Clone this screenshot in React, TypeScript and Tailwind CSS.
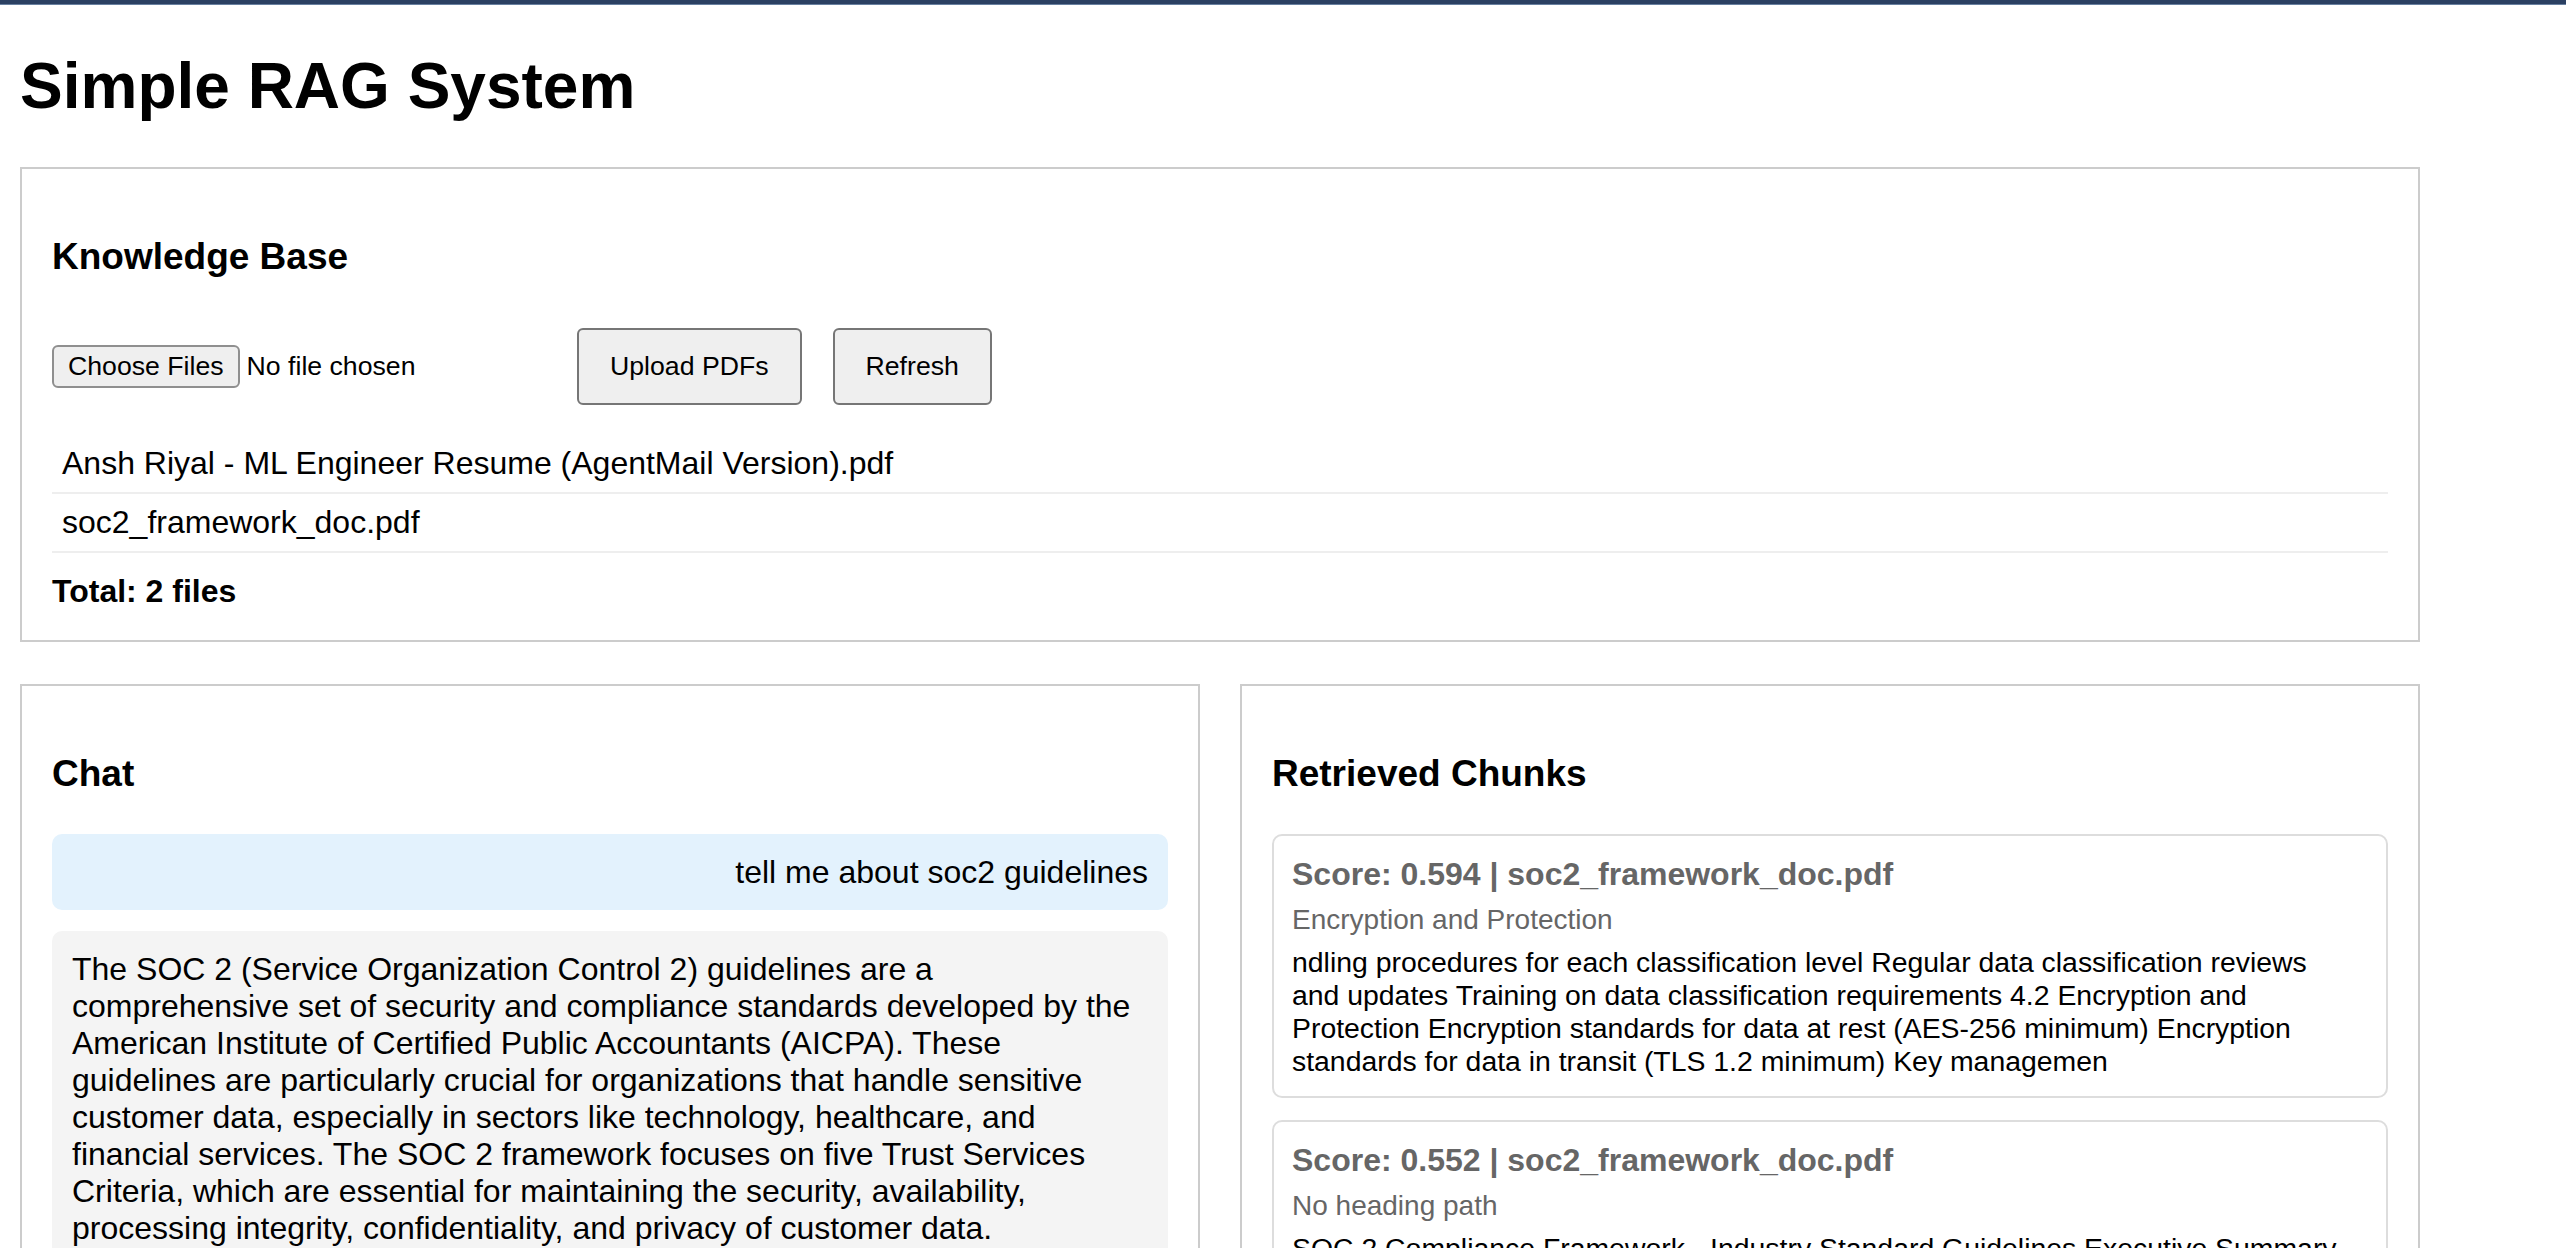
import { useState } from "react";

const files = [
  "Ansh Riyal - ML Engineer Resume (AgentMail Version).pdf",
  "soc2_framework_doc.pdf",
];

const chunks = [
  {
    score: "0.594",
    source: "soc2_framework_doc.pdf",
    path: "Encryption and Protection",
    text: "ndling procedures for each classification level Regular data classification reviews and updates Training on data classification requirements 4.2 Encryption and Protection Encryption standards for data at rest (AES-256 minimum) Encryption standards for data in transit (TLS 1.2 minimum) Key managemen",
  },
  {
    score: "0.552",
    source: "soc2_framework_doc.pdf",
    path: "No heading path",
    text: "SOC 2 Compliance Framework - Industry Standard Guidelines Executive Summary This document outlines the comprehensive SOC 2 compliance framework for organizations handling sensitive customer data.",
  },
];

const answer =
  "The SOC 2 (Service Organization Control 2) guidelines are a comprehensive set of security and compliance standards developed by the American Institute of Certified Public Accountants (AICPA). These guidelines are particularly crucial for organizations that handle sensitive customer data, especially in sectors like technology, healthcare, and financial services. The SOC 2 framework focuses on five Trust Services Criteria, which are essential for maintaining the security, availability, processing integrity, confidentiality, and privacy of customer data.";

function Panel({ title, children }: { title: string; children: React.ReactNode }) {
  return (
    <section className="border-2 border-[#cccccc] px-[30px] pt-[30px] pb-[30px]">
      <h3 className="mt-[37px] mb-[39px] text-[37px] leading-[42px] font-bold">{title}</h3>
      {children}
    </section>
  );
}

export default function App() {
  const [question, setQuestion] = useState("");

  return (
    <div className="min-h-screen bg-white text-black font-['Liberation_Sans',Arial,sans-serif]">
      {/* window strip */}
      <div className="h-[4px] bg-[#2b4062]" />
      <div className="h-px bg-[#6880a0]" />

      <div className="px-[20px] pb-[40px]">
        <div className="max-w-[2400px]">
          <h1 className="mt-[44px] text-[64px] leading-[74px] font-bold">Simple RAG System</h1>

          {/* Knowledge base */}
          <section className="mt-[44px] border-2 border-[#cccccc] px-[30px] pt-[30px] pb-[30px]">
            <h3 className="mt-[37px] mb-[50px] text-[37px] leading-[42px] font-bold">Knowledge Base</h3>

            <div className="flex items-center">
              <label className="flex w-[505px] items-center text-[26.67px] leading-[31px]">
                <input type="file" multiple accept=".pdf" className="hidden" />
                <span className="rounded-[6px] border-2 border-[#8f8f8f] bg-[#efefef] px-[14px] py-[4px]">
                  Choose Files
                </span>
                <span className="ml-[7px]">No file chosen</span>
              </label>
              <button className="ml-[20px] rounded-[6px] border-2 border-[#767676] bg-[#efefef] px-[31px] py-[21px] text-[26.67px] leading-[31px]">
                Upload PDFs
              </button>
              <button className="ml-[31px] rounded-[6px] border-2 border-[#767676] bg-[#efefef] px-[31px] py-[21px] text-[26.67px] leading-[31px]">
                Refresh
              </button>
            </div>

            <ul className="mt-[30px]">
              {files.map((f) => (
                <li key={f} className="border-b-2 border-[#eeeeee] px-[10px] py-[10px] text-[32px] leading-[37px]">
                  {f}
                </li>
              ))}
            </ul>
            <p className="mt-[20px] text-[32px] leading-[37px] font-bold">Total: {files.length} files</p>
          </section>

          <div className="mt-[42px] grid grid-cols-2 gap-[40px]">
            <Panel title="Chat">
              <div className="rounded-[10px] bg-[#e3f2fd] p-[20px] text-right text-[32px] leading-[36px]">
                tell me about soc2 guidelines
              </div>
              <div className="mt-[21px] rounded-[10px] bg-[#f4f4f4] p-[20px] text-[32px] leading-[37px]">
                {answer}
              </div>
              <div className="mt-[30px] flex gap-[20px]">
                <input
                  value={question}
                  onChange={(e) => setQuestion(e.target.value)}
                  placeholder="Ask a question..."
                  className="flex-1 border-2 border-[#cccccc] px-[16px] py-[12px] text-[28px]"
                />
                <button className="rounded-[6px] border-2 border-[#767676] bg-[#efefef] px-[31px] text-[26.67px]">
                  Send
                </button>
              </div>
            </Panel>

            <Panel title="Retrieved Chunks">
              <div className="mt-[1px]">
                {chunks.map((c, i) => (
                  <div key={i} className="mb-[22px] rounded-[10px] border-2 border-[#dddddd] px-[18px] pt-[20px] pb-[18px]">
                    <div className="mb-[11px] text-[32px] leading-[37px] font-bold text-[#666666]">
                      Score: {c.score} | {c.source}
                    </div>
                    <div className="mb-[10px] text-[28px] leading-[32px] text-[#666666]">{c.path}</div>
                    <div className="pr-[10px] text-[28.4px] leading-[33px]">{c.text}</div>
                  </div>
                ))}
              </div>
            </Panel>
          </div>
        </div>
      </div>
    </div>
  );
}
